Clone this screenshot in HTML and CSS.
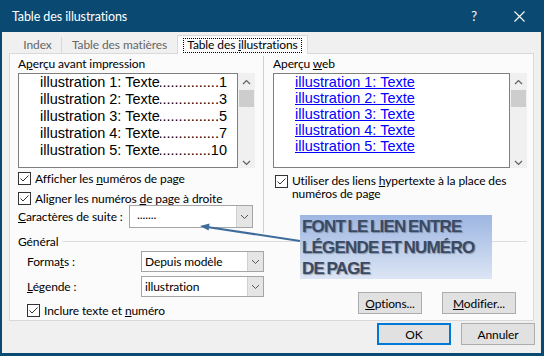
FILE: index.html
```html
<!DOCTYPE html>
<html lang="fr">
<head>
<meta charset="utf-8">
<title>Table des illustrations</title>
<link rel="stylesheet" href="styles.css">
</head>
<body>
<div class="window">
  <div class="titlebar">
    <span class="title">Table des illustrations</span>
    <span class="help">?</span>
    <svg class="close" width="11" height="11" viewBox="0 0 11 11"><path d="M0.5 0.5L10.5 10.5M10.5 0.5L0.5 10.5" stroke="#fff" stroke-width="1.1" fill="none"/></svg>
  </div>
  <div class="body">
    <div class="tabs">
      <div class="tab first">Index</div>
      <div class="tab second">Table des matières</div>
      <div class="tab active"><span class="focus">Table des <u>i</u>llustrations</span></div>
    </div>
    <div class="panel">
      <div class="top">
        <div class="col left">
          <div class="label">A<u>p</u>erçu avant impression</div>
          <div class="preview">
            <div class="list print">
              <div class="entry"><span class="t">illustration 1: Texte</span><span class="dots">..............................................</span><span class="n">1</span></div>
              <div class="entry"><span class="t">illustration 2: Texte</span><span class="dots">..............................................</span><span class="n">3</span></div>
              <div class="entry"><span class="t">illustration 3: Texte</span><span class="dots">..............................................</span><span class="n">5</span></div>
              <div class="entry"><span class="t">illustration 4: Texte</span><span class="dots">..............................................</span><span class="n">7</span></div>
              <div class="entry"><span class="t">illustration 5: Texte</span><span class="dots">..............................................</span><span class="n">10</span></div>
            </div>
            <div class="scrollbar">
              <div class="sb-up"><svg width="9" height="6" viewBox="0 0 9 6"><path d="M1 5L4.5 1.5L8 5" stroke="#606060" stroke-width="1.2" fill="none"/></svg></div>
              <div class="thumb"></div>
              <div class="sb-space"></div>
              <div class="sb-down"><svg width="9" height="6" viewBox="0 0 9 6"><path d="M1 1L4.5 4.5L8 1" stroke="#606060" stroke-width="1.2" fill="none"/></svg></div>
            </div>
          </div>
          <div class="check">
            <svg class="box" width="13" height="13" viewBox="0 0 13 13"><rect x="0.5" y="0.5" width="12" height="12" fill="#fff" stroke="#333"/><path d="M2.5 6.5L5 9L10.5 3.5" stroke="#333" stroke-width="1" fill="none"/></svg>
            <span>Afficher les <u>n</u>uméros de page</span>
          </div>
          <div class="check">
            <svg class="box" width="13" height="13" viewBox="0 0 13 13"><rect x="0.5" y="0.5" width="12" height="12" fill="#fff" stroke="#333"/><path d="M2.5 6.5L5 9L10.5 3.5" stroke="#333" stroke-width="1" fill="none"/></svg>
            <span>Aligner les numéros <u>d</u>e page à droite</span>
          </div>
          <div class="suite">
            <span class="suite-label"><u>C</u>aractères de suite :</span>
            <div class="combo suite-combo">
              <span class="val">.......</span>
              <span class="btn"><svg width="9" height="6" viewBox="0 0 9 6"><path d="M1 1L4.5 4.5L8 1" stroke="#555" stroke-width="1" fill="none"/></svg></span>
            </div>
          </div>
        </div>
        <div class="sep"></div>
        <div class="col right">
          <div class="label">Aperçu <u>w</u>eb</div>
          <div class="preview">
            <div class="list web">
              <div class="link">illustration 1: Texte</div>
              <div class="link">illustration 2: Texte</div>
              <div class="link">illustration 3: Texte</div>
              <div class="link">illustration 4: Texte</div>
              <div class="link">illustration 5: Texte</div>
            </div>
            <div class="scrollbar">
              <div class="sb-up"><svg width="9" height="6" viewBox="0 0 9 6"><path d="M1 5L4.5 1.5L8 5" stroke="#606060" stroke-width="1.2" fill="none"/></svg></div>
              <div class="thumb"></div>
              <div class="sb-space"></div>
              <div class="sb-down"><svg width="9" height="6" viewBox="0 0 9 6"><path d="M1 1L4.5 4.5L8 1" stroke="#606060" stroke-width="1.2" fill="none"/></svg></div>
            </div>
          </div>
          <div class="check multi">
            <svg class="box" width="13" height="13" viewBox="0 0 13 13"><rect x="0.5" y="0.5" width="12" height="12" fill="#fff" stroke="#333"/><path d="M2.5 6.5L5 9L10.5 3.5" stroke="#333" stroke-width="1" fill="none"/></svg>
            <span>Utiliser des liens <u>h</u>ypertexte à la place des<br>numéros de page</span>
          </div>
        </div>
      </div>
      <div class="ghead"><span>Général</span><span class="gline"></span></div>
      <div class="gbody">
        <div class="grid">
          <span class="glabel">Forma<u>t</u>s :</span>
          <div class="combo">
            <span class="val">Depuis modèle</span>
            <span class="btn"><svg width="9" height="6" viewBox="0 0 9 6"><path d="M1 1L4.5 4.5L8 1" stroke="#555" stroke-width="1" fill="none"/></svg></span>
          </div>
          <span class="glabel"><u>L</u>égende :</span>
          <div class="combo">
            <span class="val">illustration</span>
            <span class="btn"><svg width="9" height="6" viewBox="0 0 9 6"><path d="M1 1L4.5 4.5L8 1" stroke="#555" stroke-width="1" fill="none"/></svg></span>
          </div>
          <div class="check span2">
            <svg class="box" width="13" height="13" viewBox="0 0 13 13"><rect x="0.5" y="0.5" width="12" height="12" fill="#fff" stroke="#333"/><path d="M2.5 6.5L5 9L10.5 3.5" stroke="#333" stroke-width="1" fill="none"/></svg>
            <span>Inclure texte et <u>n</u>uméro</span>
          </div>
        </div>
        <div class="gbuttons">
          <button class="button options"><u>O</u>ptions...</button>
          <button class="button modifier"><u>M</u>odifier...</button>
        </div>
      </div>
    </div>
    <div class="footer">
      <button class="button ok">OK</button>
      <button class="button">Annuler</button>
    </div>
  </div>
  <svg class="arrow" width="544" height="356" viewBox="0 0 544 356">
    <path d="M300 241L207 227" stroke="#3d6b9a" stroke-width="2" fill="none"/>
    <path d="M200 226L209.6 223.6L208.6 230.6Z" fill="#3d6b9a"/>
  </svg>
  <div class="callout">FONT LE LIEN ENTRE<br>LÉGENDE ET NUMÉRO<br>DE PAGE</div>
</div>
</body>
</html>
```
FILE: styles.css
```css
* { box-sizing: border-box; }
html, body { margin: 0; padding: 0; }
body {
  width: 544px;
  height: 356px;
  overflow: hidden;
  font-family: Lato, "Noto Sans", sans-serif;
  font-size: 12px;
  letter-spacing: -0.1px;
  color: #000;
  background: #f0f0f0;
}
u { text-decoration: underline; text-underline-offset: 1px; }

.window {
  position: relative;
  width: 544px;
  height: 356px;
  background: #0a4a72;
  padding: 0 3px 3px 2px;
  display: flex;
  flex-direction: column;
}
.titlebar {
  height: 32px;
  display: flex;
  align-items: center;
  color: #fff;
  flex: none;
}
.title { margin-left: 10px; flex: 1; font-size: 12.5px; }
.help { font-size: 13px; margin-right: 37px; }
.close { margin-right: 16px; }

.body {
  flex: 1;
  background: #f0f0f0;
  display: flex;
  flex-direction: column;
}

.tabs {
  display: flex;
  align-items: flex-end;
  height: 18px;
  margin-top: 3px;
  padding-left: 12px;
}
.tab {
  height: 16px;
  line-height: 15px;
  text-align: center;
  color: #666;
}
.tab.first { width: 48px; border-right: 1px solid #d9d9d9; }
.tab.second { width: 115px; }
.tab.active {
  position: relative;
  z-index: 1;
  width: 131px;
  height: 19px;
  margin-bottom: -1px;
  background: #fbfbfb;
  border: 1px solid #d9d9d9;
  border-bottom: none;
  color: #000;
  padding-top: 1px;
}
.focus {
  display: inline-block;
  border: 1px dotted #000;
  line-height: 12px;
  padding: 0 3px 1px;
}

.panel {
  margin-left: 7px;
  width: 525px;
  height: 268px;
  border: 1px solid #d9d9d9;
  background: #fbfbfb;
  padding: 2px 6px 0 8px;
  display: flex;
  flex-direction: column;
}
.top {
  display: flex;
  height: 177px;
}
.col { display: flex; flex-direction: column; }
.col.left { width: 237px; }
.col.right { width: 254px; }
.sep {
  width: 1px;
  background: #d0d0d0;
  margin: 0 9px 0 8px;
}
.label { height: 17px; line-height: 16px; }

.preview {
  display: flex;
  height: 95px;
}
.list {
  flex: 1;
  background: #fff;
  border: 1px solid #7f7f7f;
  font-family: "Liberation Sans", Arial, sans-serif;
  font-size: 14.5px;
  letter-spacing: 0;
  overflow: hidden;
}
.list.print { padding: 0 10px 0 21px; line-height: 17px; }
.list.web { padding: 0 0 0 21px; line-height: 16px; }
.entry { display: flex; white-space: nowrap; }
.dots {
  flex: 1;
  overflow: hidden;
  white-space: nowrap;
  direction: rtl;
  min-width: 0;
}
.link { color: #0000ff; text-decoration: underline; white-space: nowrap; }

.scrollbar {
  width: 17px;
  background: #f0f0f0;
  display: flex;
  flex-direction: column;
}
.sb-up { height: 17px; display: flex; align-items: center; justify-content: center; }
.thumb { height: 17px; margin: 0 1px 0 1px; background: #cdcdcd; }
.sb-space { flex: 1; }
.sb-down { height: 11px; display: flex; align-items: center; justify-content: center; }

.check {
  display: flex;
  align-items: center;
  height: 20px;
  white-space: nowrap;
}
.check .box { flex: none; margin-right: 4px; }
.check.multi {
  align-items: flex-start;
  height: auto;
  margin-top: 6px;
  margin-left: 2px;
  line-height: 13px;
}
.check.multi .box { margin-top: 1px; }

.suite {
  display: flex;
  align-items: center;
  height: 23px;
  margin-top: -3px;
  white-space: nowrap;
}
.suite-label { width: 111px; }
.combo {
  display: flex;
  align-items: stretch;
  background: #fff;
  border: 1px solid #a5a5a5;
  height: 21px;
  width: 123px;
}
.suite-combo { width: 124px; height: 23px; }
.combo .val { flex: 1; padding-left: 3px; line-height: 19px; white-space: nowrap; }
.suite-combo .val { padding-left: 7px; line-height: 17px; }
.combo .btn {
  width: 16px;
  background: #e5e5e5;
  border-left: 1px solid #d0d0d0;
  display: flex;
  align-items: center;
  justify-content: center;
}

.ghead {
  display: flex;
  align-items: center;
  height: 16px;
}
.gline {
  flex: 1;
  height: 1px;
  background: #dcdcdc;
  margin-left: 5px;
}
.gbody {
  display: flex;
  align-items: flex-end;
  margin-top: 2px;
  padding-left: 9px;
}
.grid {
  display: grid;
  grid-template-columns: 114px 123px;
  grid-template-rows: 21px 21px 19px;
  row-gap: 4px;
  align-items: center;
}
.grid .check { height: 19px; margin-top: -1px; }
.span2 { grid-column: 1 / 3; }

.gbuttons {
  margin-left: auto;
  margin-right: 11px;
  margin-bottom: 6px;
  display: flex;
  gap: 20px;
}
.button {
  font-family: inherit;
  font-size: 12px;
  letter-spacing: -0.1px;
  color: #000;
  height: 22px;
  padding: 0;
  background: #e1e1e1;
  border: 1px solid #adadad;
  border-radius: 0;
}
.options { width: 64px; }
.modifier { width: 74px; }

.footer {
  display: flex;
  justify-content: flex-end;
  gap: 10px;
  margin-top: 2px;
  margin-right: 6px;
}
.footer .button { width: 74px; }
.footer .ok { border: 2px solid #0078d7; }

.arrow {
  position: absolute;
  left: 0;
  top: 0;
  pointer-events: none;
}
.callout {
  position: absolute;
  left: 300px;
  top: 215px;
  width: 192px;
  height: 64px;
  padding: 1px 0 0 2px;
  background: linear-gradient(#9db6e2, #dce5f4);
  font-family: "Liberation Sans", Arial, sans-serif;
  font-weight: bold;
  font-size: 17px;
  line-height: 21px;
  letter-spacing: -0.8px;
  word-spacing: -1.5px;
  color: #3a4a64;
  text-shadow: 1px 1px 1px rgba(0, 0, 0, 0.3);
  white-space: nowrap;
}
```
